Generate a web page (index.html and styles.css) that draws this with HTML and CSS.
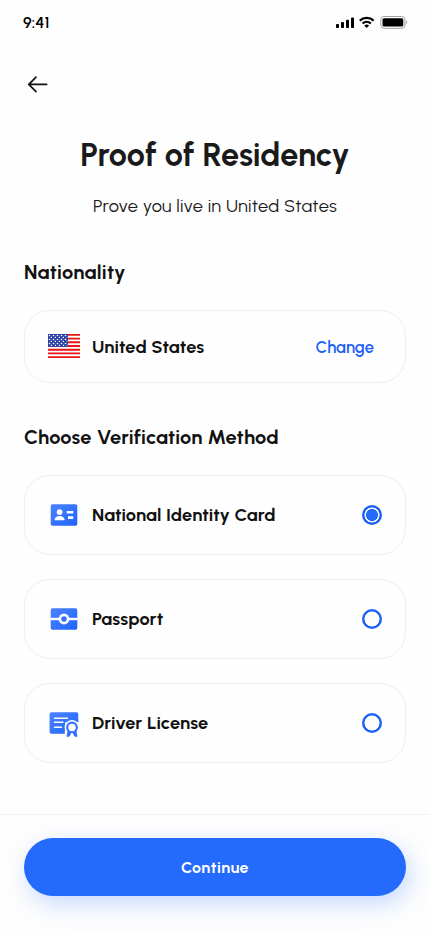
FILE: index.html
```html
<!DOCTYPE html>
<html lang="en">
<head>
<meta charset="utf-8">
<meta name="viewport" content="width=device-width, initial-scale=1">
<title>Proof of Residency</title>
<link rel="stylesheet" href="styles.css">
</head>
<body>
<div class="screen">
  <header class="status">
    <span class="time">9:41</span>
    <svg class="status-icons" width="72" height="14" viewBox="0 0 72 14">
      <rect x="0" y="9" width="3" height="4" rx=".8"/>
      <rect x="5" y="7" width="3" height="6" rx=".8"/>
      <rect x="10" y="4.7" width="3" height="8.3" rx=".8"/>
      <rect x="15" y="2.5" width="3" height="10.5" rx=".8"/>
      <path d="M23.8 5.6a10 10 0 0 1 13.8 0M26.5 8.5a6.2 6.2 0 0 1 8.4 0" fill="none" stroke="#000" stroke-width="2.2"/>
      <path d="M28.3 10.6a3.6 3.6 0 0 1 4.8 0L30.7 13z"/>
      <rect x="44.8" y="1.5" width="24.2" height="11.8" rx="3.3" fill="none" stroke="#a3a3a3"/>
      <rect x="46.5" y="3.2" width="20.8" height="8.4" rx="1.6"/>
      <path d="M70.2 5.6v3.6c1.5-.6 1.5-3 0-3.6z" fill="#a3a3a3"/>
    </svg>
  </header>
  <nav class="nav">
    <button class="back" aria-label="Back">
      <svg width="28" height="28" viewBox="0 0 28 28" fill="none" stroke="#111" stroke-width="1.7" stroke-linecap="round" stroke-linejoin="round"><path d="M22.6 14.4H4.8M12 7.1l-7.2 7.3 7.2 7.2"/></svg>
    </button>
  </nav>
  <main class="content">
    <h1 class="title">Proof of Residency</h1>
    <p class="subtitle">Prove you live in United States</p>
    <h2 class="heading nationality">Nationality</h2>
    <div class="card country">
      <svg class="icon flag" width="32" height="24" viewBox="0 0 32 24">
        <defs><pattern id="stars" width="4" height="4" patternUnits="userSpaceOnUse"><circle cx="1.5" cy="1.5" r=".8" fill="#fff"/><circle cx="3.5" cy="3.5" r=".8" fill="#fff"/></pattern></defs>
        <path fill="#fff" d="M0 0h32v24H0z"/>
        <path stroke="#e81515" stroke-width="1.9" d="M0 .92h32M0 4.62h32M0 8.31h32M0 12h32M0 15.69h32M0 19.38h32M0 23.08h32"/>
        <path fill="#2d42a5" d="M0 0h20v12.9H0z"/>
        <path fill="url(#stars)" d="M.5.5h18.8v11.8H.5z"/>
      </svg>
      <span class="label">United States</span>
      <button class="change">Change</button>
    </div>
    <h2 class="heading methods">Choose Verification Method</h2>
    <div class="options">
      <label class="card option">
        <svg class="icon" width="32" height="32" viewBox="0 0 32 32">
          <defs><linearGradient id="blue" x1="0" y1="0" x2="1" y2="1"><stop stop-color="#4d83ff"/><stop offset="1" stop-color="#1e64fb"/></linearGradient></defs>
          <rect x="2.7" y="5.3" width="26.6" height="21.4" rx="1.8" fill="url(#blue)"/>
          <g fill="#fff"><circle cx="11.6" cy="13.1" r="2.9"/><path d="M6.5 21.3c0-2.4 2.1-4.3 5.1-4.3s5.1 1.9 5.1 4.3z"/><path d="M18.7 12h6.6v2.6h-6.6zM20 17.3h5.3V20H20z"/></g>
        </svg>
        <span class="label">National Identity Card</span>
        <span class="radio checked"></span>
      </label>
      <label class="card option">
        <svg class="icon" width="32" height="32" viewBox="0 0 32 32">
          <rect x="2.7" y="5.3" width="26.6" height="21.4" rx="1.8" fill="url(#blue)"/>
          <path fill="#fff" d="M2.5 14.8h27v2.4h-27z"/>
          <circle cx="16" cy="16" r="5.4" fill="#fff"/><circle cx="16" cy="16" r="2.8" fill="#386fff"/>
        </svg>
        <span class="label">Passport</span>
        <span class="radio"></span>
      </label>
      <label class="card option">
        <svg class="icon" width="32" height="32" viewBox="0 0 32 32">
          <path fill="url(#blue)" d="M3.4 5.3h25.1a1.8 1.8 0 0 1 1.8 1.8v8.2H17.2v11.4H3.4a1.8 1.8 0 0 1-1.8-1.8V7.1a1.8 1.8 0 0 1 1.8-1.8z"/>
          <path stroke="#fff" stroke-width="1.4" stroke-linecap="round" d="M6.5 11.2h13M6.5 15.2h8.5M6.5 20.2h7"/>
          <path fill="#fff" d="M16.8 23h14v8h-14z"/>
          <circle cx="24" cy="20.4" r="7.4" fill="#fff"/>
          <path fill="#3470fc" d="m19.8 23.2-1.4 6.6h2.3l1.4-1 1.2-3.4zM28.2 23.2l1.4 6.6h-2.3l-1.4-1-1.2-3.4z"/>
          <circle cx="24" cy="20.4" r="4.8" fill="#fff" stroke="#3470fc" stroke-width="2.1"/>
        </svg>
        <span class="label">Driver License</span>
        <span class="radio"></span>
      </label>
    </div>
  </main>
  <footer class="footer"><button class="continue">Continue</button></footer>
</div>
</body>
</html>
```

FILE: styles.css
```css
* { box-sizing: border-box; }
body {
  margin: 0;
  background: #fefefe;
  color: #1a1a1a;
  font-family: Urbanist, Lato, sans-serif;
}
button {
  padding: 0;
  border: 0;
  background: none;
  font: inherit;
}
.screen {
  width: 430px;
  height: 932px;
  display: flex;
  flex-direction: column;
  overflow: hidden;
}
.status {
  height: 44px;
  padding: 0 22px 0 23px;
  display: flex;
  justify-content: space-between;
  align-items: center;
}
.time { font-size: 16px; font-weight: 600; letter-spacing: .1px; color: #000; }
.nav { height: 80px; padding: 26px 24px 0; }
.back { display: block; height: 28px; }
.back svg, .icon { display: block; flex: none; }
.content { padding: 0 24px; flex: 1; }
.title {
  margin: 12px 0 0;
  line-height: 38px;
  font-size: 32.4px;
  font-weight: 700;
  letter-spacing: .08px;
  text-align: center;
}
.subtitle {
  margin: 20px 0 0;
  line-height: 25px;
  font-size: 18.2px;
  letter-spacing: .24px;
  text-align: center;
}
.heading {
  margin: 0;
  line-height: 24px;
  font-size: 20px;
  font-weight: 700;
  letter-spacing: .18px;
  color: #111;
}
.nationality { margin-top: 41px; letter-spacing: .27px; }
.card {
  border: 1px solid #eee;
  border-radius: 26px;
  padding: 0 23px;
  display: flex;
  align-items: center;
  gap: 12px;
}
.country { margin-top: 26px; height: 73px; padding-right: 31px; }
.flag { margin-bottom: 1px; }
.label {
  flex: 1;
  font-size: 18.2px;
  font-weight: 700;
  letter-spacing: .09px;
  white-space: nowrap;
  color: #111;
}
.change { font-size: 16.5px; color: #1d60f8; font-weight: 600; letter-spacing: .04px; }
.methods { margin-top: 42px; }
.options { margin-top: 26px; display: grid; gap: 24px; }
.option { height: 80px; }
.radio {
  width: 20px;
  height: 20px;
  border-radius: 50%;
  background: radial-gradient(circle closest-side, transparent 7.2px, #1d62f8 7.8px);
}
.checked {
  background: radial-gradient(circle closest-side, #246bfd 5.7px, #fff 6.3px, #fff 7.2px, #1d62f8 7.8px);
}
.footer {
  height: 118px;
  padding: 23px 24px 0;
  border-top: 1px solid #f3f3f3;
}
.continue {
  display: block;
  width: 100%;
  height: 58px;
  border-radius: 29px;
  background: #246bfd;
  color: #fff;
  font-size: 16px;
  font-weight: 700;
  letter-spacing: .5px;
  box-shadow: 4px 8px 24px rgba(36, 107, 253, .25);
}
```
